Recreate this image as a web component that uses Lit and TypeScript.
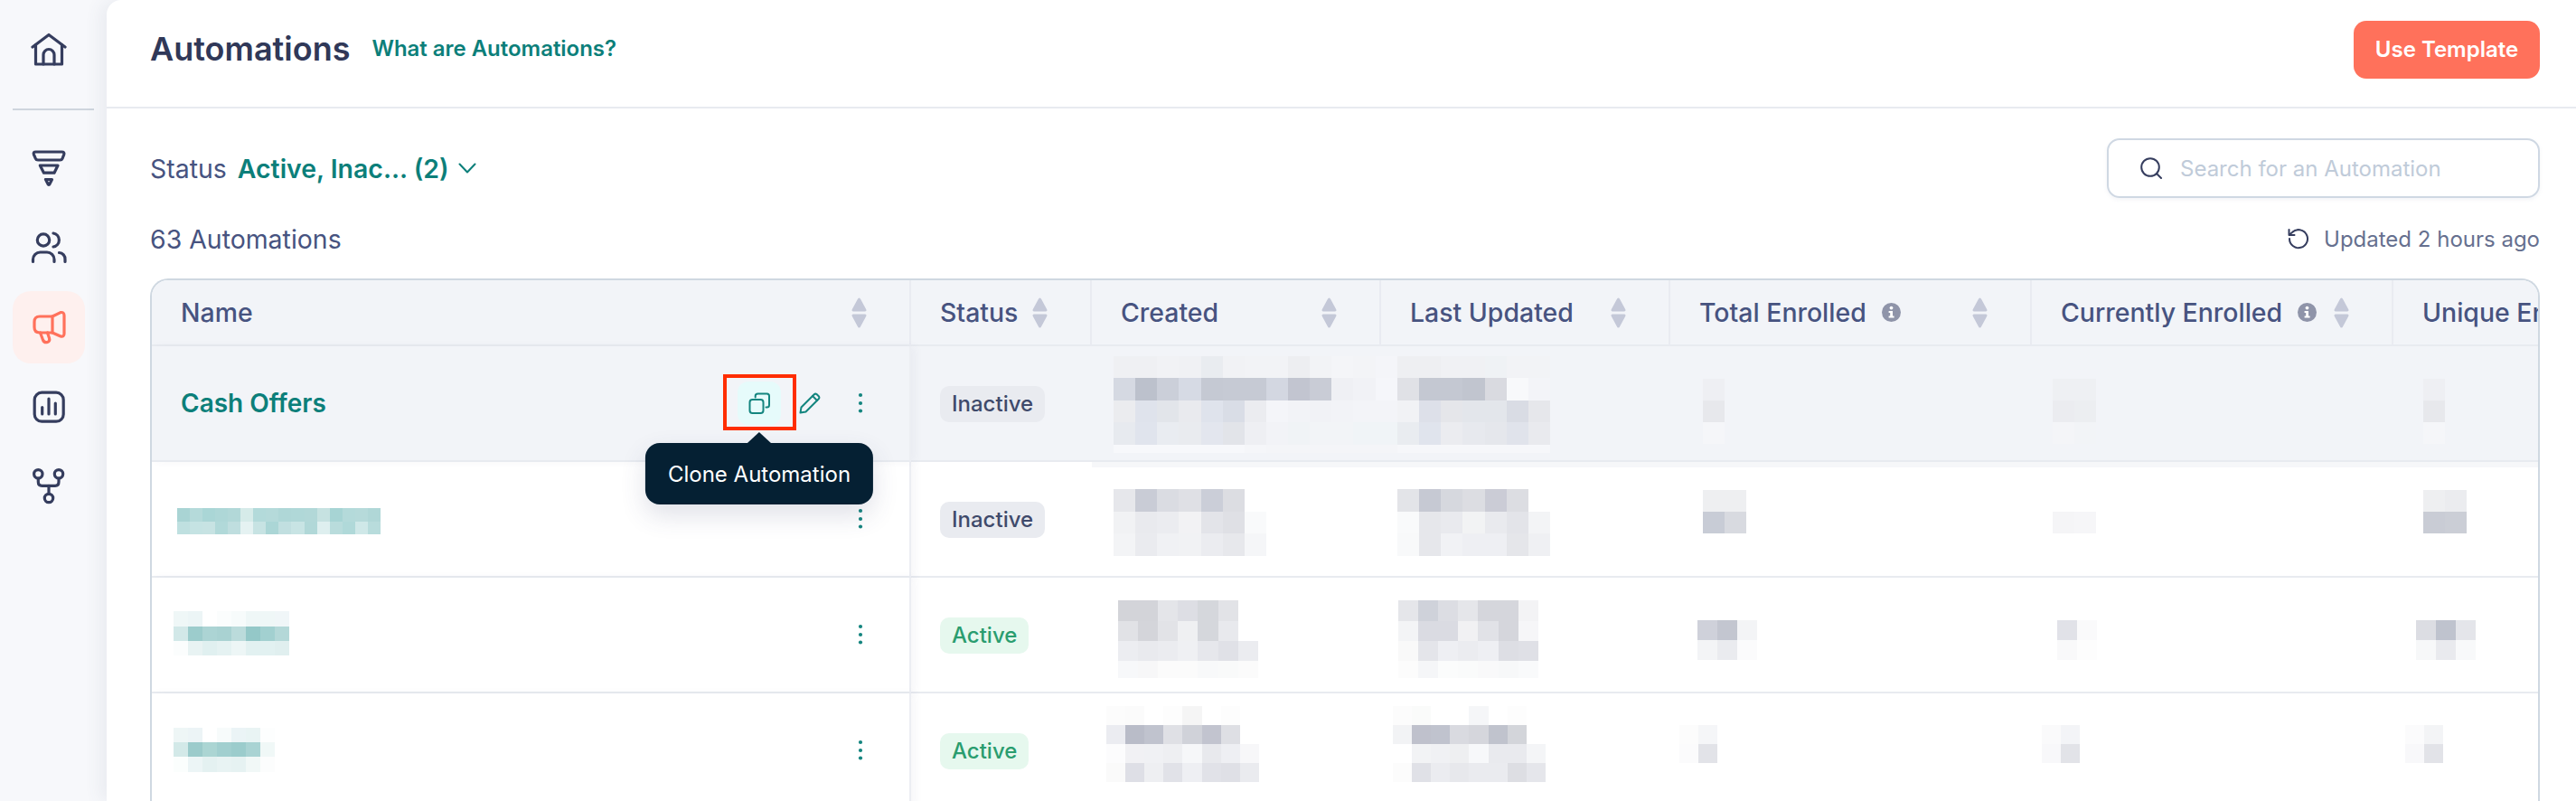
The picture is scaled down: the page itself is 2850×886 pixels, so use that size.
import { LitElement, html, css, svg, nothing } from "lit";
import { customElement } from "lit/decorators.js";

type Mosaic = { x: number; y: number; w: number; hs: number[]; rows: string[] };

const COLS = [168, 1008, 1208, 1528, 1848, 2248, 2648];
const ROW_Y = [383, 511, 639, 767];

const r1Hs = [24, 25, 24, 25, 9];

// rows: space-separated greys/teals from the pixelated (redacted) values of the table
const ROWS: { name: string | Mosaic; status: string; cells: Mosaic[] }[] = [
  {
    name: "Cash Offers",
    status: "Inactive",
    cells: [
      { x: 1232, y: 394, w: 24.13, hs: r1Hs, rows: [
        "eff0f3 eff0f3 f1f2f5 f0f1f4 e9ecf0 f1f2f5 f2f3f6 f2f3f6 edeef1 f2f3f6 f4f5f8 f3f4f7 f4f5f9",
        "d5d9e2 bcc1cc cbcfd9 d6dae4 c5c9d3 c6cad4 c6cad4 d3d7e1 c2c5d0 c9ccd6 eff0f4 f1f2f6 f5f6fa",
        "ebecef dfe3ec e2e5ea e9eaee dfe3ec d9dde6 ebecf0 f4f5f9 f2f3f7 f1f2f6 f2f3f7 f3f4f8 f3f4f8",
        "e7eaef e0e4ed e9ecf1 e9ebef e3e6ee e2e4e9 eeeff3 f2f3f7 f0f3f6 f2f4f7 f2f4f7 f0f4f7 f0f4f7",
        "f7f8fb f7f8fb f7f8fb f7f8fb f7f8fb f7f8fb f5f6f9 f4f5f8 f4f5f8 f4f5f8 f4f5f8 f4f5f8 f4f5f8",
      ] },
      { x: 1546, y: 394, w: 24.13, hs: r1Hs, rows: [
        "eeeff2 eeeff2 f0f1f4 f0f1f4 eff2f5 f2f3f6 f2f3f6",
        "e0e1e6 c4c8d2 c4c8d2 c1c5cf d9dae0 f8f9fb f3f4f8",
        "f1f2f5 dde0e9 e5e6ea e3e6eb e3e6eb d9dce4 e6e7eb",
        "e9ecf0 e0e4ed ebecf0 e7e9ee e5e7ec e0e3eb e9eaee",
        "f6f7fa f6f7fa f6f7fa f6f7fa f6f7fa f6f7fa f6f7fa",
      ] },
      { x: 1884, y: 419, w: 24, hs: [24, 24, 24], rows: ["eeeff3", "e7e8ec", "f5f6f9"] },
      { x: 2271, y: 419, w: 24, hs: [24, 24, 24], rows: ["eef0f3 eef0f3", "ebecf0 eceef1", "f4f5f8 f2f4f7"] },
      { x: 2681, y: 419, w: 24, hs: [24, 24, 24], rows: ["eeeff3", "e7e8ec", "f5f6f9"] },
    ],
  },
  {
    name: { x: 196, y: 562, w: 14.05, hs: [15, 14], rows: [
      "a9d4d4 b5dada aad6d6 aed7d7 b2d8d8 d6ebe9 b3dada b5dada afd7d7 b0d8d8 b2d8d8 c6e2e1 a7d4d4 b4dada b6dada b0d7d7",
      "bfe0e0 c5e3e3 c7e3e3 b1d9d9 bfdedf e5f2f2 c7e3e3 abd6d6 c1dfe0 c8e4e4 b1d8d8 deefef b9dcdc b0d9d9 cfe8e8 b8dcdc",
    ] },
    status: "Inactive",
    cells: [
      { x: 1232, y: 541, w: 24.13, hs: [25, 24, 25], rows: [
        "e6e7eb c9ccd6 dadce2 dfe0e5 cbced8 dcdde2 ffffff",
        "f1f2f4 e9eaee ebecf0 f2f2f4 e3e4e9 dfe0e5 f9fafb",
        "f3f4f6 eaebef f0f1f4 f1f2f4 ebecf0 e7e8ec f5f6f8",
      ] },
      { x: 1546, y: 541, w: 24.13, hs: [25, 24, 25], rows: [
        "e3e4e8 c6c9d3 d6d8de dcdde2 cbccd6 dcdde2 ffffff",
        "f9fafb e6e7eb e9eaee f2f3f4 e9eaee e3e4e9 f3f4f6",
        "f8f9fa e6e7eb f1f2f5 eeeff3 eeeff3 e5e6ea eff0f3",
      ] },
      { x: 1884, y: 542, w: 24, hs: [24, 24], rows: ["eeeff1 eeeff1", "c8ccd6 d8dae0"] },
      { x: 2271, y: 566, w: 24, hs: [24], rows: ["f5f5f7 f6f6f8"] },
      { x: 2681, y: 542, w: 24, hs: [24, 24], rows: ["eeeff1 ebecef", "c9ccd5 cbced6"] },
    ],
  },
  {
    name: { x: 192, y: 676, w: 16, hs: [17, 16, 16], rows: [
      "eff7f7 ecf5f6 ffffff fbfdfd f7fbfb eff7f7 eff7f7 f0f6f8",
      "d2e8e8 9ccccc acd4d4 a9d2d2 bbdbdb 94c8c8 a2d0d0 b4d8d8",
      "fbfdfd e8f3f3 e0f0f0 e5f2f2 edf6f6 e2f1f1 e2f1f1 e0efef",
    ] },
    status: "Active",
    cells: [
      { x: 1237, y: 664, w: 22.1, hs: [23, 22, 22, 19], rows: [
        "d3d4d9 d3d4d9 e4e5e9 dddee4 d5d7dc e2e3e7 ffffff",
        "e1e2e6 d4d5da e2e3e7 eff0f2 d5d7dc e8e9ed ffffff",
        "ecedf1 e9eaee ebecf0 eff0f3 e6e7ec e0e1e7 ebecf0",
        "f7f8fa f7f7f8 fbfbfb fbfbfb f8f9fa f9fafa fbfbfb",
      ] },
      { x: 1547, y: 664, w: 22.1, hs: [23, 22, 22, 19], rows: [
        "e5e6ea cfd2da dcdde3 e5e6ea d5d6dc d5d6dc f3f3f5",
        "f3f4f6 dadbe2 dadbe2 f1f1f3 e1e2e7 d5d6dc f6f6f8",
        "f9f9f9 e4e5ea eeeff3 ebecf0 eeeff3 dddee4 dfe0e6",
        "fcfcfc f5f6f8 fbfcfc fafbfb f9f9fa f7f8f9 f9fafb",
      ] },
      { x: 1878, y: 686, w: 22, hs: [22, 22], rows: ["cfd1da c3c6d0 f3f4f6", "f3f4f6 eaebef fbfbfc"] },
      { x: 2276, y: 686, w: 22, hs: [22, 22], rows: ["e1e2e8 fafafb", "f9f9fa fdfdfd"] },
      { x: 2673, y: 686, w: 22, hs: [22, 22], rows: ["dcdde3 bfc3ce e4e5ea", "f7f8f9 e9eaee f8f9fa"] },
    ],
  },
  {
    name: { x: 192, y: 805, w: 16, hs: [16, 16, 17], rows: [
      "eef6f6 ecf4f6 ffffff f7fbfb ebf4f6 e9f4f4 fdfefe",
      "d3e9e8 9bcbcb abd5d3 a1cfcf 9bcccc a9d3d3 f0f8f7",
      "fbfefd ecf5f6 e4f1f1 e8f3f3 e6f2f2 f1f8f7 fcfdfd",
    ] },
    status: "Active",
    cells: [
      { x: 1224, y: 781, w: 21.1, hs: [21, 21, 21, 21], rows: [
        "fcfcfc fbfbfb ffffff fdfdfd f5f5f5 ffffff fdfdfd ffffff",
        "ebecf1 b9bcc8 c0c3ce dfe0e5 d0d2d9 c2c4cf dedfe4 ffffff",
        "fcfcfd f1f1f4 f0f1f4 eeeff2 f6f7f9 e8e9ed eeeff3 f7f7f9",
        "fafafa dedfe6 eeeff2 e1e2e8 eeeff3 e1e2e8 dfe0e6 eaebef",
      ] },
      { x: 1541, y: 781, w: 21.1, hs: [21, 21, 21, 21], rows: [
        "fcfcfc fafbfa ffffff ffffff f5f6f8 ffffff fdfdfd ffffff",
        "f2f3f5 bfc1cc c0c3ce d9dae0 d5d6dc c0c3cd d3d5da ffffff",
        "ffffff f2f3f5 f0f1f4 eeeff1 f7f8fa e9eaee e9eaee f4f5f7",
        "fcfcfc e0e1e7 ebecf0 e7e8ec eaebef eaebef dddee3 e5e6eb",
      ] },
      { x: 1858, y: 802, w: 21, hs: [21, 21], rows: ["fcfcfc f5f6f8", "fbfbfc e2e3e8"] },
      { x: 2259, y: 802, w: 21, hs: [21, 21], rows: ["fafafb f3f4f7", "f8f8fa e2e3e8"] },
      { x: 2661, y: 802, w: 21, hs: [21, 21], rows: ["fbfbfc f3f4f6", "f8f8fa e2e3e8"] },
    ],
  },
];

const HEADERS: { label: string; info?: boolean; sort?: boolean }[] = [
  { label: "Name", sort: true },
  { label: "Status", sort: true },
  { label: "Created", sort: true },
  { label: "Last Updated", sort: true },
  { label: "Total Enrolled", info: true, sort: true },
  { label: "Currently Enrolled", info: true, sort: true },
  { label: "Unique Enrolled" },
];

function mosaic(m: Mosaic, colX: number, rowY: number) {
  const cells: unknown[] = [];
  let y = 0;
  m.rows.forEach((row, ri) => {
    row.split(" ").forEach((c, ci) => {
      cells.push(svg`<rect x=${ci * m.w} y=${y} width=${m.w + 0.2} height=${m.hs[ri]} fill=${"#" + c}></rect>`);
    });
    y += m.hs[ri];
  });
  const width = Math.max(...m.rows.map((r) => r.split(" ").length)) * m.w;
  return html`<svg class="mosaic" shape-rendering="crispEdges" width=${width} height=${y}
    style="margin-left:${m.x - colX}px;margin-top:${m.y - rowY}px">${cells}</svg>`;
}

const sortIcon = html`<svg class="sort" width="17" height="34" viewBox="0 0 17 34">
  <path d="M8.5 0.5 Q9.6 0.5 10.2 2 L16.4 13.5 Q17 15.5 15 15.5 H2 Q0 15.5 0.6 13.5 L6.8 2 Q7.4 0.5 8.5 0.5Z" fill="#c4c8d8"></path>
  <path d="M8.5 33.5 Q9.6 33.5 10.2 32 L16.4 20.5 Q17 18.5 15 18.5 H2 Q0 18.5 0.6 20.5 L6.8 32 Q7.4 33.5 8.5 33.5Z" fill="#c4c8d8"></path>
</svg>`;

const infoIcon = html`<svg width="21" height="21" viewBox="0 0 21 21">
  <circle cx="10.5" cy="10.5" r="10.5" fill="#8f94a9"></circle>
  <circle cx="10.5" cy="5.6" r="1.9" fill="#fff"></circle>
  <path d="M7.6 9 H12 V14.6 H13.6 V16.6 H7.6 V14.6 H9.2 V11 H7.6Z" fill="#fff"></path>
</svg>`;

const dots = html`<svg width="8" height="26" viewBox="0 0 8 26">
  <circle cx="4" cy="4" r="2.1"></circle><circle cx="4" cy="13" r="2.1"></circle><circle cx="4" cy="21.5" r="2.1"></circle>
</svg>`;

@customElement("app-root")
export class AppRoot extends LitElement {
  static styles = css`
    :host {
      display: flex;
      height: 886px;
      overflow: hidden;
      background: #f7f8fb;
      font-family: Inter, "Liberation Sans", sans-serif;
      color: #475380;
    }
    svg { display: block; flex: none; }
    .side {
      width: 118px;
      flex: none;
      box-sizing: border-box;
      padding: 15px 14px 0;
      display: flex;
      flex-direction: column;
      gap: 8px;
    }
    .nav {
      width: 80px;
      height: 80px;
      flex: none;
      border-radius: 20px;
      display: flex;
      align-items: center;
      justify-content: center;
      fill: none;
      stroke: #353d5e;
      stroke-width: 3.2;
      stroke-linecap: round;
      stroke-linejoin: round;
    }
    .nav.on { background: #fef0ee; stroke: #ff715b; }
    .divider { height: 2px; background: #cfd5de; margin: 17px 0 16px; flex: none; }
    .main {
      flex: 1;
      min-width: 0;
      background: #fff;
      border-top-left-radius: 16px;
      box-shadow: -8px 0 18px rgba(70, 80, 120, 0.07);
      position: relative;
    }
    .head {
      height: 120px;
      box-sizing: border-box;
      border-bottom: 2px solid #e8ebf0;
      padding: 23px 40px 0 49px;
      display: flex;
      align-items: flex-start;
    }
    .head-row { display: flex; align-items: center; height: 64px; flex: 1; margin-top: -1px; }
    h1 { margin: 0; font-size: 36px; font-weight: 600; color: #303858; line-height: 1; margin-left: -1px; }
    .link { margin-left: 24px; font-size: 24px; font-weight: 600; letter-spacing: -0.03px; color: #0c7f7a; margin-top: -2px; }
    .cta {
      margin-left: auto;
      height: 64px;
      width: 206px;
      margin-top: 1px;
      border-radius: 14px;
      background: #ff715b;
      color: #fff;
      font-size: 24px;
      font-weight: 600;
      display: flex;
      align-items: center;
      justify-content: center;
    }
    .body { padding: 33px 40px 0 48px; }
    .tools { display: flex; align-items: center; height: 66px; }
    .filter { font-size: 28.44px; display: flex; align-items: center; }
    .filter b { font-weight: 600; color: #0c7f7a; margin-left: 12px; }
    .filter svg { margin-left: 10px; }
    .search {
      margin-left: auto;
      width: 479px;
      height: 66px;
      box-sizing: border-box;
      border: 2px solid #cfd8e3;
      border-radius: 14px;
      box-shadow: 0 2px 4px rgba(100, 120, 150, 0.08);
      display: flex;
      align-items: center;
      padding-left: 35px;
      gap: 19px;
      font-size: 24px;
      color: #c0cbd9;
    }
    .count-row { display: flex; align-items: center; height: 34px; margin-top: 28px; }
    .count { font-size: 28.44px; }
    .updated { margin-left: auto; display: flex; align-items: center; gap: 17px; font-size: 24px; color: #66708f; }
    .table {
      margin-top: 27px;
      border: 2px solid #cfd8e1;
      border-bottom: 0;
      border-radius: 20px 20px 0 0;
      overflow: hidden;
      width: 2644px;
      box-sizing: border-box;
    }
    .row {
      display: grid;
      grid-template-columns: 840px 200px 320px 320px 400px 400px 400px;
      height: 128px;
      position: relative;
      background: #fff;
    }
    .row.hd { height: 73px; background: #f2f4f8; z-index: 1; }
    .row.hot { background: #f2f4f8; z-index: 3; }
    .cell { box-sizing: border-box; border-bottom: 2px solid #e8ebf0; min-width: 0; }
    .row:nth-child(n + 2) .cell.first { position: relative; z-index: 2; }
    .hd .cell {
      display: flex;
      align-items: center;
      justify-content: space-between;
      padding: 0 47px 0 32px;
      border-right: 2px solid #e9ebf1;
      font-size: 28.44px;
      font-weight: 500;
      white-space: nowrap;
    }
    .hd .cell:last-child { padding-right: 0; border-right: 0; }
    .hd .lab { display: flex; align-items: center; gap: 17px; }
    .first {
      position: relative;
      border-right: 2px solid #eceef3;
      box-shadow: 5px 0 9px rgba(70, 80, 120, 0.045);
      display: flex;
      align-items: center;
      background: inherit;
    }
    .first .mosaic { align-self: flex-start; }
    .name { font-size: 28px; font-weight: 600; color: #0c7f7a; margin-left: 32px; }
    .actions { position: absolute; right: 30px; top: 0; bottom: 0; display: flex; align-items: center; gap: 8px; }
    .act {
      width: 48px;
      height: 48px;
      border-radius: 12px;
      display: flex;
      align-items: center;
      justify-content: center;
      position: relative;
      fill: none;
      stroke: #14857f;
      stroke-width: 2;
      stroke-linejoin: round;
      stroke-linecap: round;
    }
    .act.dots { fill: #14857f; stroke: none; }
    .act.hover { background: #e6fbfb; }
    .mark { position: absolute; left: -16px; right: -17px; top: -8px; bottom: -6px; border: 4px solid #ff2d00; }
    .tip {
      position: absolute;
      top: 68px;
      left: 50%;
      transform: translateX(-50%);
      height: 68px;
      box-sizing: border-box;
      padding: 0 25px;
      display: flex;
      align-items: center;
      white-space: nowrap;
      border-radius: 16px;
      background: #052033;
      color: #fff;
      font-size: 24px;
      box-shadow: 0 12px 28px rgba(60, 70, 110, 0.16);
    }
    .tip::before {
      content: "";
      position: absolute;
      left: 50%;
      top: -12px;
      margin-left: -13px;
      border: 13px solid transparent;
      border-top: 0;
      border-bottom: 12px solid #052033;
    }
    .stat { display: flex; align-items: center; padding-left: 32px; }
    .pill {
      height: 40px;
      margin-top: 1px;
      padding: 0 13px;
      border-radius: 10px;
      display: flex;
      align-items: center;
      font-size: 24px;
      background: #e9ebf0;
      color: #3f4a6b;
      font-weight: 500;
    }
    .pill.Active { background: #e6f8ee; color: #2a9d6f; }
    .band { background: linear-gradient(#f6f7f9 0 6px, transparent 6px); }
  `;

  private icon(on: boolean, body: unknown) {
    return html`<div class="nav ${on ? "on" : ""}"><svg width="40" height="40" viewBox="0 0 40 40">${body}</svg></div>`;
  }

  render() {
    return html`
      <nav class="side">
        ${this.icon(false, svg`<path d="M2 17 L20 3.5 L38 17"></path><path d="M5.5 14.5 V36 H34.5 V14.5"></path><path d="M14 36 V25.5 a6 6 0 0 1 12 0 V36"></path>`)}
        <div class="divider"></div>
        ${this.icon(false, svg`<path d="M5.5 2 H34.5 Q37.5 2 36.8 4.8 L35 9.5 Q34.4 11 32.5 11 H8 Q6 11 5.4 9.5 L3.4 4.8 Q2.5 2 5.5 2Z"></path><path d="M10.3 17 H30 L26 25.2 H14.5Z"></path><path d="M16.5 32.5 H23.5 L20.7 38 Q20 38.6 19.3 38 Z"></path>`)}
        ${this.icon(false, svg`<circle cx="14" cy="11.5" r="6.7"></circle><path d="M25 4 A7.6 7.6 0 0 1 25 19"></path><path d="M2.5 35.5 V33 A8 8 0 0 1 10.5 25 H18 A8 8 0 0 1 26 33 V35.5"></path><path d="M31.5 25.5 A7 7 0 0 1 38 33 V35.5"></path>`)}
        ${this.icon(true, svg`<path d="M24 8 L33 3.6 Q37 3 37 7 V27 Q37 31 33 30 L24 26 Z"></path><path d="M24 8 H10 Q4 8 4 14 V20 Q4 26 10 26 H24"></path><path d="M10.5 26 L13.5 34 Q15 37.5 18.5 36.5 Q21.5 35.5 20.5 32 L18.5 26"></path>`)}
        ${this.icon(false, svg`<rect x="4.2" y="4.2" width="32" height="32" rx="8"></rect><path d="M12.7 20.5 V28"></path><path d="M20 11 V28"></path><path d="M27.3 16 V28"></path>`)}
        ${this.icon(false, svg`<circle cx="8.3" cy="6.3" r="4.7"></circle><circle cx="31" cy="6.3" r="4.7"></circle><circle cx="20" cy="33" r="4.7"></circle><path d="M8.3 11 V15 Q8.3 19.3 12.5 19.3 H27 Q31 19.3 31 15 V11"></path><path d="M20 19.3 V28.3"></path>`)}
      </nav>
      <main class="main">
        <header class="head">
          <div class="head-row">
            <h1>Automations</h1>
            <span class="link">What are Automations?</span>
            <span class="cta">Use Template</span>
          </div>
        </header>
        <div class="body">
          <div class="tools">
            <div class="filter">
              Status<b>Active, Inac... (2)</b>
              <svg width="20" height="12" viewBox="0 0 20 12" fill="none" stroke="#0c7f7a" stroke-width="2" stroke-linecap="round" stroke-linejoin="round"><path d="M1.5 1.5 L10 10.5 L18.5 1.5"></path></svg>
            </div>
            <div class="search">
              <svg width="25" height="24" viewBox="0 0 25 24" fill="none" stroke="#353d5e" stroke-width="2" stroke-linecap="round"><circle cx="11" cy="11" r="9.8"></circle><path d="M18 18 L23 23"></path></svg>
              Search for an Automation
            </div>
          </div>
          <div class="count-row">
            <div class="count">63 Automations</div>
            <div class="updated">
              <svg width="24" height="24" viewBox="0 0 24 24" fill="none" stroke="#353d5e" stroke-width="2" stroke-linecap="round" stroke-linejoin="round"><path d="M3 12 A10 10 0 1 0 6 5 L3 7.5"></path><path d="M2.5 2 V8 H8.5"></path></svg>
              Updated 2 hours ago
            </div>
          </div>
          <div class="table">
            <div class="row hd">
              ${HEADERS.map(
                (h) => html`<div class="cell">
                  <span class="lab">${h.label}${h.info ? infoIcon : nothing}</span>
                  ${h.sort ? sortIcon : nothing}
                </div>`
              )}
            </div>
            ${ROWS.map((r, i) => this.renderRow(r, i))}
          </div>
        </div>
      </main>
    `;
  }

  private renderRow(r: (typeof ROWS)[number], i: number) {
    const y = ROW_Y[i];
    return html`<div class="row ${i === 0 ? "hot" : ""}">
      <div class="cell first">
        ${typeof r.name === "string" ? html`<span class="name">${r.name}</span>` : mosaic(r.name, COLS[0], y)}
        <div class="actions">
          ${i === 0
            ? html`
                <div class="act hover">
                  <svg width="25" height="24" viewBox="0 0 25 24"><rect x="1.5" y="8" width="15" height="15" rx="3"></rect><path d="M7.7 5.5 V4 Q7.7 1.5 10.5 1.5 H20.5 Q23 1.5 23 4 V14 Q23 16.5 20.5 16.5 H19.5"></path></svg>
                  <div class="mark"></div>
                  <div class="tip">Clone Automation</div>
                </div>
                <div class="act">
                  <svg width="24" height="24" viewBox="0 0 24 24"><path d="M1.5 22.5 L2.5 16.5 L16.5 2.5 Q18 1 19.5 2 L22 4.5 Q23 6 21.5 7.5 L7.5 21.5 Z"></path><path d="M15 4 L20 9"></path></svg>
                </div>
              `
            : nothing}
          <div class="act dots">${dots}</div>
        </div>
      </div>
      <div class="cell stat"><span class="pill ${r.status}">${r.status}</span></div>
      ${r.cells.map(
        (m, ci) => html`<div class="cell ${i === 1 ? "band" : ""}">${mosaic(m, COLS[ci + 2], y)}</div>`
      )}
    </div>`;
  }
}
